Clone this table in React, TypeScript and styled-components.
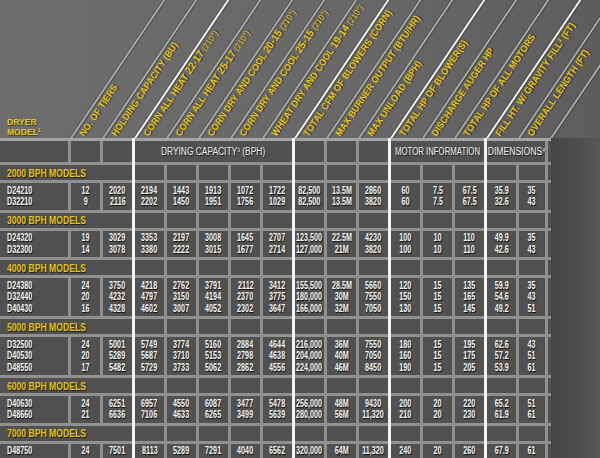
import * as React from 'react';
import styled, { createGlobalStyle } from 'styled-components';

const sans = `"Liberation Sans", Arial, sans-serif`;
const gridLine = '#909090';
const whiteLine = '#f2f2f2';
const yellow = '#e6c51c';
const columns = '68px repeat(15, 32px)';

type Edge = 'none' | 'grey' | 'white';

const GlobalStyle = createGlobalStyle`
  html, body {
    margin: 0;
    padding: 0;
    background: #5a5a5a;
  }
  body {
    font-family: ${sans};
  }
`;

const Page = styled.div`
  width: 600px;
  height: 458px;
  overflow: hidden;
  display: flex;
  flex-direction: column;
  background: linear-gradient(90deg, #6d6d6d 0%, #686868 60%, #5d5d5d 100%);
`;

// condensed look: no narrow face installed, so squeeze horizontally
const Squeeze = styled.span<{ $x?: number; $from?: 'left' | 'center' }>`
  display: inline-block;
  white-space: nowrap;
  transform: scaleX(${p => p.$x ?? 0.75});
  transform-origin: ${p => (p.$from === 'left' ? 'left' : 'center')} center;
`;

const HeaderStrip = styled.div`
  flex: none;
  height: 138px;
  display: grid;
  grid-template-columns: ${columns} 1fr;
  overflow: hidden;
`;

const ModelHead = styled.div`
  display: flex;
  flex-direction: column;
  justify-content: flex-end;
  align-items: flex-start;
  padding: 0 0 1px 7px;
  color: ${yellow};
  font-size: 9.5px;
  font-weight: bold;
  line-height: 10px;
  text-shadow: 1px 1px 1px rgba(0, 0, 0, 0.5);
`;

const Slant = styled.div<{ $white?: boolean }>`
  position: relative;
  display: flex;
  align-items: flex-end;
  padding-left: 18px;

  &::before {
    content: '';
    position: absolute;
    left: 2px;
    bottom: 0;
    width: 2px;
    height: 172px;
    background: ${p => (p.$white ? whiteLine : '#a8a8a8')};
    box-shadow: 1px 0 0 rgba(0, 0, 0, 0.35), -1px 0 0 rgba(0, 0, 0, 0.2);
    transform-origin: 0 100%;
    transform: rotate(34deg);
  }
`;

const SlantLabel = styled.span`
  display: block;
  white-space: nowrap;
  transform-origin: 0 100%;
  transform: rotate(-56deg) scaleX(0.95);
  color: ${yellow};
  font-size: 9.5px;
  font-weight: bold;
  line-height: 10px;
  text-shadow: 1px 1px 1px rgba(0, 0, 0, 0.6);
`;

const Big = styled.span`
  font-size: 10.5px;
  font-weight: 900;
`;

const Light = styled.span`
  font-weight: normal;
  font-size: 8.5px;
`;

const Sup = styled.span`
  font-size: 6px;
  vertical-align: 3px;
  line-height: 6px;
`;

const Body = styled.div`
  flex: 1;
  min-height: 0;
  display: flex;
`;

const Table = styled.div`
  flex: none;
  width: 551px;
  border-top: 3px solid #a4a4a4;
  background: #505050;
`;

const Side = styled.div`
  flex: 1;
  background: linear-gradient(90deg, #454545 0%, #4d4d4d 50%, #585858 100%);
`;

const Row = styled.div`
  display: grid;
  grid-template-columns: ${columns};

  & + & {
    border-top: 3px solid ${gridLine};
  }
`;

const Cell = styled.div<{ $edge: Edge; $last?: boolean; $span?: number }>`
  position: relative;
  grid-column: span ${p => p.$span ?? 1};
  border-left: ${p => (p.$edge === 'none' ? '0' : `3px solid ${p.$edge === 'white' ? whiteLine : gridLine}`)};
  border-right: ${p => (p.$last ? `3px solid ${gridLine}` : '0')};
  background: #515151;

  &::before {
    content: '';
    display: ${p => (p.$edge === 'white' ? 'block' : 'none')};
    position: absolute;
    left: -3px;
    top: -3px;
    width: 3px;
    height: 3px;
    background: ${whiteLine};
  }
`;

const GroupCell = styled(Cell)`
  height: 21px;
  display: flex;
  align-items: center;
  justify-content: center;
  color: #efefef;
  font-size: 10px;
  text-shadow: 1px 1px 1px rgba(0, 0, 0, 0.7);
`;

const SectionCell = styled(Cell)`
  height: 15px;
  display: flex;
  align-items: center;
  padding-left: 7px;
  color: ${yellow};
  font-size: 10.5px;
  font-weight: bold;
  text-shadow: 1px 1px 1px rgba(0, 0, 0, 0.7);
`;

const DataCell = styled(Cell)<{ $left?: boolean }>`
  display: flex;
  flex-direction: column;
  align-items: ${p => (p.$left ? 'flex-start' : 'center')};
  padding: 1.75px 0 1.75px ${p => (p.$left ? '7px' : '0')};
  color: #f4f4f4;
  font-size: 10px;
  font-weight: bold;
  line-height: 11.5px;
  text-shadow: 1px 1px 1px rgba(0, 0, 0, 0.85);
`;

const headers: { label: React.ReactNode; white?: boolean }[] = [
  { label: 'NO. OF TIERS' },
  { label: 'HOLDING CAPACITY (BU)' },
  { label: <>CORN ALL HEAT <Big>22-17</Big> <Light>(210°)</Light></>, white: true },
  { label: <>CORN ALL HEAT <Big>25-17</Big> <Light>(210°)</Light></> },
  { label: <>CORN DRY AND COOL <Big>20-15</Big> <Light>(210°)</Light></> },
  { label: <>CORN DRY AND COOL <Big>25-15</Big> <Light>(210°)</Light></> },
  { label: <>WHEAT DRY AND COOL <Big>19-14</Big> <Light>(210°)</Light></> },
  { label: 'TOTAL CFM OF BLOWERS (CORN)', white: true },
  { label: 'MAX BURNER OUTPUT (BTU/HR)' },
  { label: 'MAX UNLOAD (BPH)' },
  { label: 'TOTAL  HP OF BLOWER(S)', white: true },
  { label: 'DISCHARGE AUGER HP' },
  { label: 'TOTAL HP OF ALL MOTORS' },
  { label: <>FILL HT. W/ GRAVITY FILL<Sup>2</Sup> (FT)</>, white: true },
  { label: 'OVERALL LENGTH (FT)' },
];

// edges for the 16 table columns (model first)
const edges: Edge[] = [
  'none', 'grey', 'grey', 'white', 'grey', 'grey', 'grey', 'grey',
  'white', 'grey', 'grey', 'white', 'grey', 'grey', 'white', 'grey',
];

const sections: { title: string; rows: string[][] }[] = [
  {
    title: '2000 BPH MODELS',
    rows: [
      ['D24210', '12', '2020', '2194', '1443', '1913', '1072', '1722', '82,500', '13.5M', '2860', '60', '7.5', '67.5', '35.9', '35'],
      ['D32210', '9', '2116', '2202', '1450', '1951', '1756', '1029', '82,500', '13.5M', '3820', '60', '7.5', '67.5', '32.6', '43'],
    ],
  },
  {
    title: '3000 BPH MODELS',
    rows: [
      ['D24320', '19', '3029', '3353', '2197', '3008', '1645', '2707', '123,500', '22.5M', '4230', '100', '10', '110', '49.9', '35'],
      ['D32300', '14', '3078', '3380', '2222', '3015', '1677', '2714', '127,000', '21M', '3820', '100', '10', '110', '42.6', '43'],
    ],
  },
  {
    title: '4000 BPH MODELS',
    rows: [
      ['D24380', '24', '3750', '4218', '2762', '3791', '2112', '3412', '155,500', '28.5M', '5660', '120', '15', '135', '59.9', '35'],
      ['D32440', '20', '4232', '4797', '3150', '4194', '2370', '3775', '180,000', '30M', '7550', '150', '15', '165', '54.6', '43'],
      ['D40430', '16', '4328', '4602', '3007', '4052', '2302', '3647', '166,000', '32M', '7050', '130', '15', '145', '49.2', '51'],
    ],
  },
  {
    title: '5000 BPH MODELS',
    rows: [
      ['D32500', '24', '5001', '5749', '3774', '5160', '2884', '4644', '216,000', '36M', '7550', '180', '15', '195', '62.6', '43'],
      ['D40530', '20', '5289', '5687', '3710', '5153', '2798', '4638', '204,000', '40M', '7050', '160', '15', '175', '57.2', '51'],
      ['D48550', '17', '5482', '5729', '3733', '5062', '2862', '4556', '224,000', '46M', '8450', '190', '15', '205', '53.9', '61'],
    ],
  },
  {
    title: '6000 BPH MODELS',
    rows: [
      ['D40630', '24', '6251', '6957', '4550', '6087', '3477', '5478', '256,000', '48M', '9430', '200', '20', '220', '65.2', '51'],
      ['D48660', '21', '6636', '7106', '4633', '6265', '3499', '5639', '280,000', '56M', '11,320', '210', '20', '230', '61.9', '61'],
    ],
  },
  {
    title: '7000 BPH MODELS',
    rows: [
      ['D48750', '24', '7501', '8113', '5289', '7291', '4040', '6562', '320,000', '64M', '11,320', '240', '20', '260', '67.9', '61'],
    ],
  },
];

const SectionBlock = ({ title, rows }: { title: string; rows: string[][] }) => (
  <>
    <Row>
      <SectionCell $edge="none" $span={3}>
        <Squeeze $x={0.82} $from="left">{title}</Squeeze>
      </SectionCell>
      {edges.slice(3).map((edge, i) => (
        <Cell key={i} $edge={edge} $last={i === 12} />
      ))}
    </Row>
    <Row>
      {edges.map((edge, col) => (
        <DataCell key={col} $edge={edge} $left={col === 0} $last={col === 15}>
          {rows.map((r, i) => (
            <Squeeze key={i} $x={0.72} $from={col === 0 ? 'left' : 'center'}>
              {r[col]}
            </Squeeze>
          ))}
        </DataCell>
      ))}
    </Row>
  </>
);

const App: React.FC = () => (
  <Page>
    <GlobalStyle />
    <HeaderStrip>
      <ModelHead>
        <Squeeze $x={0.9} $from="left">DRYER</Squeeze>
        <Squeeze $x={0.9} $from="left">
          MODEL<Sup>1</Sup>
        </Squeeze>
      </ModelHead>
      {headers.map((h, i) => (
        <Slant key={i} $white={h.white}>
          <SlantLabel>{h.label}</SlantLabel>
        </Slant>
      ))}
      <Slant />
    </HeaderStrip>
    <Body>
      <Table>
        <Row>
          <GroupCell $edge="none" />
          <GroupCell $edge="grey" />
          <GroupCell $edge="grey" />
          <GroupCell $edge="white" $span={5}>
            <Squeeze $x={0.84}>
              DRYING CAPACITY<Sup>3</Sup> (BPH)
            </Squeeze>
          </GroupCell>
          <GroupCell $edge="white" />
          <GroupCell $edge="grey" />
          <GroupCell $edge="grey" />
          <GroupCell $edge="white" $span={3}>
            <Squeeze $x={0.78}>MOTOR INFORMATION</Squeeze>
          </GroupCell>
          <GroupCell $edge="white" $span={2} $last>
            <Squeeze $x={0.86}>
              DIMENSIONS<Sup>4</Sup>
            </Squeeze>
          </GroupCell>
        </Row>
        {sections.map(s => (
          <SectionBlock key={s.title} title={s.title} rows={s.rows} />
        ))}
      </Table>
      <Side />
    </Body>
  </Page>
);

export default App;
